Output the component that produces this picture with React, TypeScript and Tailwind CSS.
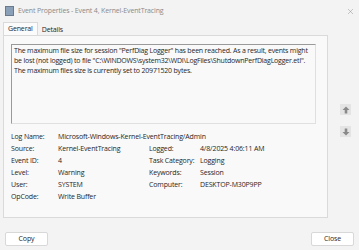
import { X } from "lucide-react";

const rows: [string, string, string, string][] = [
  ["Source:", "Kernel-EventTracing", "Logged:", "4/8/2025 4:06:11 AM"],
  ["Event ID:", "4", "Task Category:", "Logging"],
  ["Level:", "Warning", "Keywords:", "Session"],
  ["User:", "SYSTEM", "Computer:", "DESKTOP-M30P9PP"],
  ["OpCode:", "Write Buffer", "", ""],
];

function ArrowButton({ up }: { up: boolean }) {
  return (
    <div className="w-[11px] h-[11px] bg-[#e4e4e4] flex items-center justify-center">
      <svg width="8" height="8" viewBox="0 0 8 8">
        {up ? (
          <path d="M4 0.5 L7.5 4 L5.3 4 L5.3 7.5 L2.7 7.5 L2.7 4 L0.5 4 Z" fill="#8a8a8a" />
        ) : (
          <path d="M4 7.5 L7.5 4 L5.3 4 L5.3 0.5 L2.7 0.5 L2.7 4 L0.5 4 Z" fill="#8a8a8a" />
        )}
      </svg>
    </div>
  );
}

export default function App() {
  return (
    <div
      className="w-[359px] h-[250px] bg-[#f3f3f3] text-[#262626] text-[7px] leading-[10px] tracking-[-0.15px] flex flex-col overflow-hidden"
      style={{ fontFamily: '"Open Sans", "Noto Sans", sans-serif' }}
    >
      <div className="h-[22px] flex items-center pl-[5px] pr-[4px]">
        <div className="w-[9px] h-[10px] bg-[#8aa0b8] border border-[#6a7a8c] mr-[4px]" />
        <span className="text-[#8a8a8a]">Event Properties - Event 4, Kernel-EventTracing</span>
        <X className="ml-auto text-[#888]" size={9} strokeWidth={1.2} />
      </div>

      <div className="flex items-end pl-[3px] h-[13px]">
        <div className="px-[4px] h-[13px] bg-[#fbfbfb] border border-b-0 border-[#dadada] flex items-center">General</div>
        <div className="px-[4px] h-[11px] flex items-center">Details</div>
      </div>

      <div className="flex">
        <div className="ml-[3px] w-[325px] h-[183px] bg-[#f9f9f9] border border-[#dadada] pt-[8px] pl-[7px]">
          <div className="w-[305px] h-[80px] border border-[#9a9a9a] border-r-[#e0e0e0] border-b-[#e0e0e0] px-[2px] pt-[1px]">
            <p className="whitespace-nowrap tracking-[-0.2px]">
              The maximum file size for session "PerfDiag Logger" has been reached. As a result, events might
              <br />
              be lost (not logged) to file "C:\WINDOWS\system32\WDI\LogFiles\ShutdownPerfDiagLogger.etl".
              <br />
              The maximum files size is currently set to 20971520 bytes.
            </p>
          </div>
          <div className="mt-[7px] flex flex-col">
            <div className="h-[12px] flex items-center">
              <span className="w-[47px]">Log Name:</span>
              <span>Microsoft-Windows-Kernel-EventTracing/Admin</span>
            </div>
            {rows.map(([a, b, c, d]) => (
              <div key={a} className="h-[12px] flex items-center">
                <span className="w-[47px]">{a}</span>
                <span className="w-[91px]">{b}</span>
                <span className="w-[51px]">{c}</span>
                <span>{d}</span>
              </div>
            ))}
          </div>
        </div>
        <div className="flex flex-col gap-[11px] pt-[69px] pl-[12px]">
          <ArrowButton up />
          <ArrowButton up={false} />
        </div>
      </div>

      <div className="flex justify-between px-[5px] mt-[14px]">
        <button className="w-[43px] h-[14px] bg-white border border-[#d8d8d8] rounded-[2px] text-[7px]">Copy</button>
        <button className="w-[43px] h-[14px] bg-white border border-[#d8d8d8] rounded-[2px] text-[7px]">Close</button>
      </div>
    </div>
  );
}
